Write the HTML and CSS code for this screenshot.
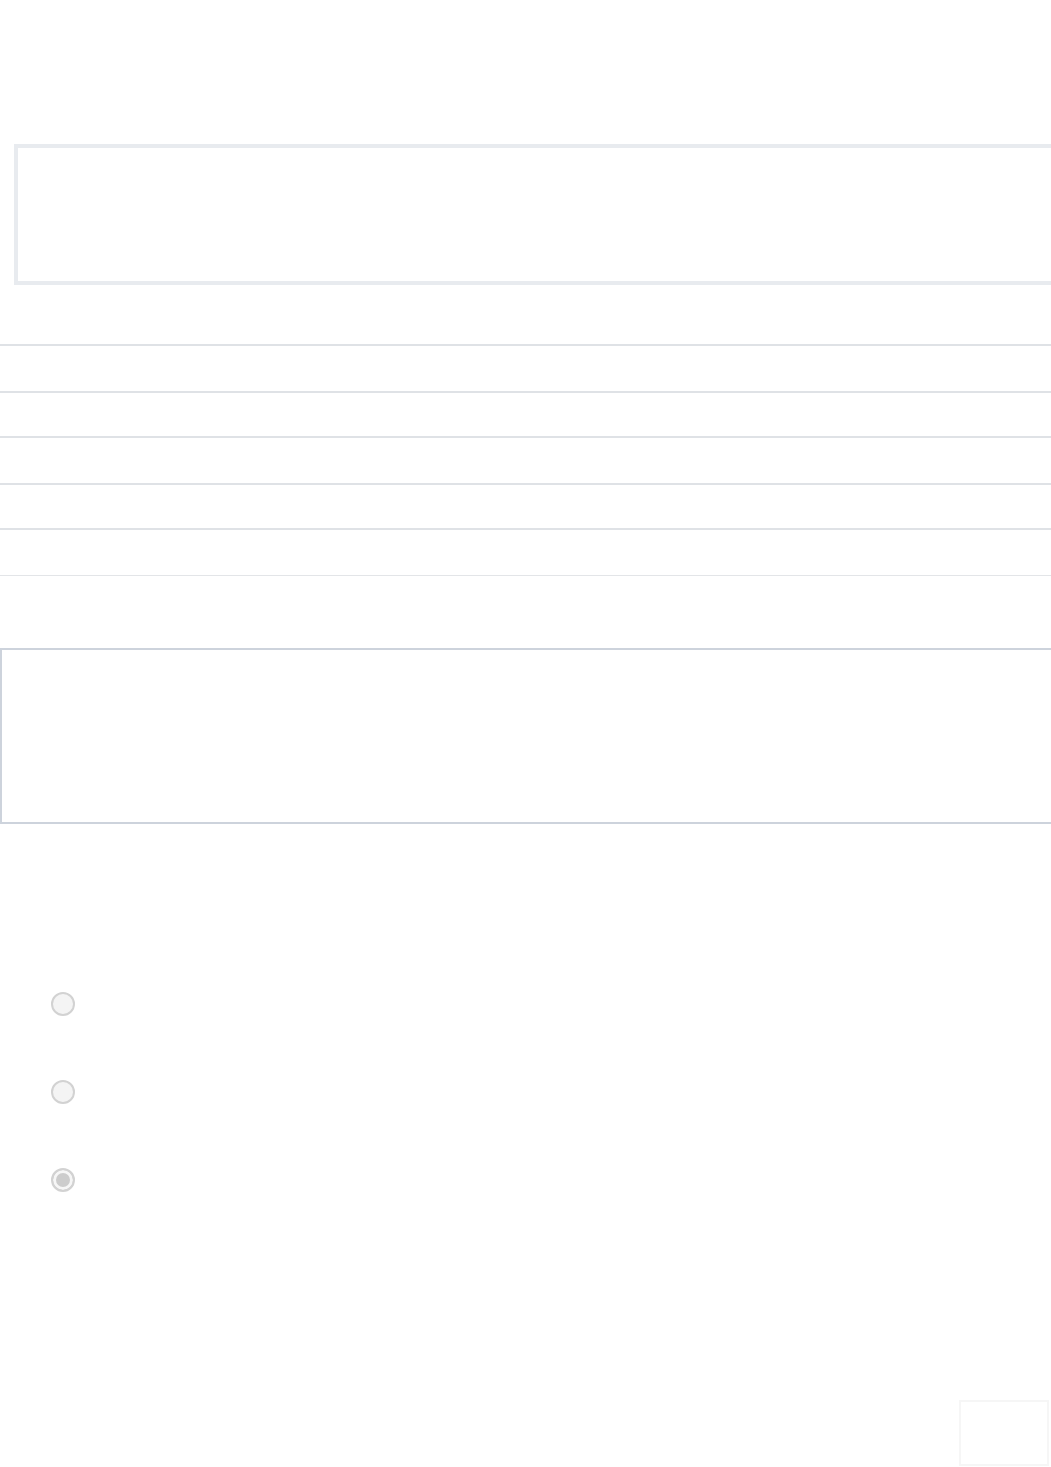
FILE: index.html
```html
<!DOCTYPE html>
<html lang="en">
<head>
<meta charset="utf-8">
<title>Page</title>
<link rel="stylesheet" href="styles.css">
</head>
<body>
<main class="page">
  <section class="panel-top"></section>
  <ul class="rows">
    <li class="row row-a"></li>
    <li class="row row-b"></li>
    <li class="row row-a"></li>
    <li class="row row-b"></li>
    <li class="row row-a"></li>
  </ul>
  <section class="panel-mid"></section>
  <form class="choices">
    <label class="choice"><input type="radio" name="opt" class="radio"></label>
    <label class="choice"><input type="radio" name="opt" class="radio"></label>
    <label class="choice"><input type="radio" name="opt" class="radio" checked></label>
  </form>
</main>
<div class="corner-box"></div>
</body>
</html>
```

FILE: styles.css
```css
html, body {
  margin: 0;
  padding: 0;
  background: #ffffff;
  font-family: "Liberation Sans", Arial, sans-serif;
  overflow: hidden;
}

.page {
  padding-top: 144px;
  width: 1051px;
  height: 1467px;
  box-sizing: border-box;
}

.panel-top {
  margin-left: 14px;
  width: 1060px;
  height: 141px;
  box-sizing: border-box;
  border: 4px solid #e8ebef;
}

.rows {
  list-style: none;
  margin: 59px 0 0 0;
  padding: 0;
  width: 1070px;
  border-bottom: 1px solid #e3e5e8;
}

.row {
  border-top: 2px solid #dfe2e6;
  box-sizing: border-box;
}

.row-a { height: 47px; }
.row-b { height: 45px; }

.panel-mid {
  margin-top: 72px;
  width: 1070px;
  height: 176px;
  box-sizing: border-box;
  border: 2px solid #cdd3dc;
}

.choices {
  margin: 168px 0 0 51px;
  display: flex;
  flex-direction: column;
  gap: 64px;
}

.choice {
  display: block;
  width: 24px;
  height: 24px;
}

.radio {
  appearance: none;
  -webkit-appearance: none;
  margin: 0;
  width: 24px;
  height: 24px;
  box-sizing: border-box;
  border-radius: 50%;
  border: 2px solid #d2d2d2;
  background: #f4f4f4;
  display: block;
}

.radio:checked {
  background: #cccccc;
  box-shadow: inset 0 0 0 3px #f6f6f6;
}

.corner-box {
  position: fixed;
  left: 959px;
  top: 1400px;
  width: 90px;
  height: 66px;
  box-sizing: border-box;
  border: 2px solid #f6f6f6;
  background: #ffffff;
}
```
